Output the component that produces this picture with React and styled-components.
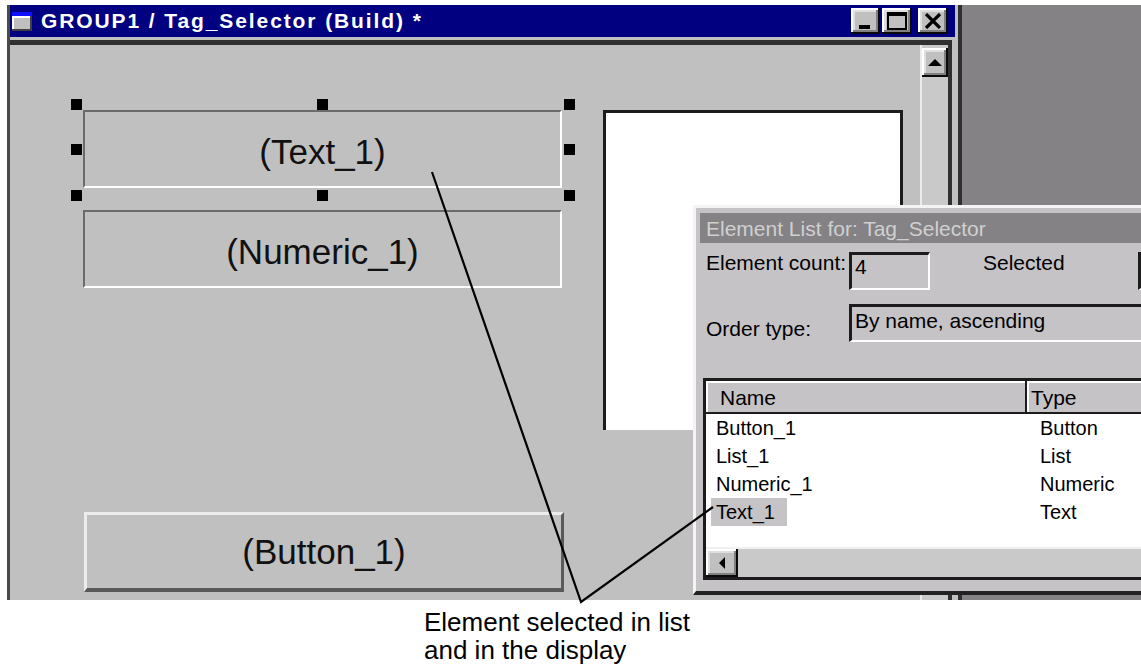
import React from 'react';
import styled, { createGlobalStyle } from 'styled-components';

const GlobalStyle = createGlobalStyle`
  html, body {
    margin: 0;
    padding: 0;
    background: #ffffff;
  }
  body {
    font-family: "Liberation Sans", Arial, sans-serif;
    color: #000;
  }
  * {
    box-sizing: border-box;
  }
`;

const Page = styled.div`
  position: relative;
  width: 1141px;
  height: 666px;
  overflow: hidden;
  background: #fff;
`;

const Screen = styled.div`
  position: relative;
  margin: 5px 0 0 7px;
  height: 595px;
  background: #848284;
  overflow: hidden;
`;

/* ---------- main builder window ---------- */

const Window = styled.div`
  position: absolute;
  left: 0;
  top: 0;
  width: 955px;
  height: 640px;
  display: flex;
  flex-direction: column;
  background: #c0c0c0;
  border-left: 3px solid #4a4a4a;
  border-right: 4px solid #303030;
`;

const TitleBar = styled.div`
  flex-shrink: 0;
  height: 32px;
  margin-right: 3px;
  background: #000080;
  display: flex;
  align-items: center;
`;

const AppIcon = styled.div`
  width: 20px;
  height: 19px;
  margin-left: 2px;
  background: #c0c0c0;
  border-top: 4px solid #1010ff;
  box-shadow: inset -2px -2px #404040, inset 2px 2px #ffffff;
`;

const TitleText = styled.div`
  margin-left: 9px;
  color: #fff;
  font-weight: bold;
  font-size: 21px;
  letter-spacing: 1.9px;
  white-space: nowrap;
`;

const CaptionButtons = styled.div`
  margin-left: auto;
  margin-right: 7px;
  display: flex;
  align-items: center;
`;

const bevel = `
  box-shadow: inset -2px -2px #0a0a0a, inset 2px 2px #ffffff,
    inset -4px -4px #808080, inset 4px 4px #dfdfdf;
`;

const CaptionButton = styled.div`
  width: ${(p) => p.$w}px;
  height: 26px;
  margin-left: ${(p) => p.$ml || 0}px;
  background: #c0c0c0;
  ${bevel}
  display: flex;
  align-items: ${(p) => (p.$bottom ? 'flex-end' : 'center')};
  justify-content: ${(p) => (p.$bottom ? 'flex-start' : 'center')};
  padding: ${(p) => (p.$bottom ? '0 0 5px 8px' : '0')};
`;

const MinGlyph = styled.div`
  width: 11px;
  height: 4px;
  background: #000;
`;

const MaxGlyph = styled.div`
  width: 20px;
  height: 18px;
  border: 2px solid #000;
  border-top-width: 4px;
`;

const Strip = styled.div`
  flex-shrink: 0;
  height: 3px;
`;

const Client = styled.div`
  flex: 1;
  display: flex;
  margin-right: 6px;
  border-top: 5px solid #303030;
  border-right: 4px solid #303030;
`;

const Canvas = styled.div`
  position: relative;
  flex: 1;
  background: #c0c0c0;
  overflow: hidden;
`;

const VScroll = styled.div`
  width: 28px;
  display: flex;
  flex-direction: column;
  padding-top: 3px;
  background: #c9c9c9;
  border-left: 2px solid #ececec;
`;

const ScrollButton = styled.div`
  flex-shrink: 0;
  width: ${(p) => p.$w || 'auto'};
  height: ${(p) => p.$h || 'auto'};
  background: #c0c0c0;
  ${bevel}
  display: flex;
  align-items: center;
  justify-content: center;
`;

const UpArrow = styled.div`
  width: 0;
  height: 0;
  border-left: 7px solid transparent;
  border-right: 7px solid transparent;
  border-bottom: 7px solid #000;
`;

const LeftArrow = styled.div`
  width: 0;
  height: 0;
  border-top: 6px solid transparent;
  border-bottom: 6px solid transparent;
  border-right: 6px solid #000;
`;

/* items placed on the design canvas */

const Item = styled.div`
  position: absolute;
  left: ${(p) => p.$x}px;
  top: ${(p) => p.$y}px;
  width: ${(p) => p.$w}px;
  height: ${(p) => p.$h}px;
  display: flex;
  align-items: center;
  justify-content: center;
  font-family: "Liberation Sans", Arial, sans-serif;
  font-size: 35px;
  color: #111;
`;

const FieldItem = styled(Item)`
  border-top: 2px solid #6a6a6a;
  border-left: 2px solid #6a6a6a;
  border-bottom: 2px solid #ffffff;
  border-right: 2px solid #ffffff;
  padding-top: 6px;
`;

const ButtonItem = styled(Item)`
  border-top: 3px solid #ececec;
  border-left: 3px solid #ececec;
  border-bottom: 4px solid #5a5a5a;
  border-right: 3px solid #5a5a5a;
`;

const ListItem = styled(Item)`
  background: #fff;
  border-top: 3px solid #1c1c1c;
  border-left: 3px solid #1c1c1c;
  border-right: 3px solid #1c1c1c;
`;

const Handle = styled.div`
  position: absolute;
  left: ${(p) => p.$cx - 5}px;
  top: ${(p) => p.$cy - 5}px;
  width: 11px;
  height: 11px;
  background: #000;
`;

/* ---------- element list dialog ---------- */

const Dialog = styled.div`
  position: absolute;
  left: 686px;
  top: 200px;
  width: 480px;
  display: flex;
  flex-direction: column;
  background: #c6c3c6;
  border-top: 3px solid #f4f4f4;
  border-left: 3px solid #f4f4f4;
  border-bottom: 4px solid #222;
  padding: 5px 0 11px 4px;
  font-family: "Liberation Sans", Arial, sans-serif;
`;

const DialogTitle = styled.div`
  height: 30px;
  background: #848284;
  color: #d0d0d0;
  font-size: 21px;
  line-height: 30px;
  padding: 1px 0 0 6px;
  white-space: nowrap;
`;

const FormRow = styled.div`
  display: flex;
  align-items: flex-start;
  margin-top: ${(p) => p.$mt}px;
  padding-left: 6px;
`;

const Label = styled.div`
  flex-shrink: 0;
  width: ${(p) => p.$w}px;
  margin-left: ${(p) => p.$ml || 0}px;
  margin-top: ${(p) => p.$mt || 0}px;
  font-size: 21px;
  line-height: 24px;
  white-space: nowrap;
`;

const Field = styled.div`
  flex-shrink: 0;
  width: ${(p) => p.$w}px;
  height: 38px;
  padding: ${(p) => p.$pt || 0}px 0 0 3px;
  border-top: 3px solid #1c1c1c;
  border-left: 3px solid #1c1c1c;
  border-right: 2px solid #fff;
  border-bottom: 2px solid #fff;
  background: #c6c3c6;
  font-size: 21px;
  line-height: 24px;
  white-space: nowrap;
`;

const ListView = styled.div`
  margin: 36px 0 0 3px;
  display: flex;
  flex-direction: column;
  background: #fff;
  border-top: 3px solid #1c1c1c;
  border-left: 3px solid #1c1c1c;
  border-bottom: 3px solid #1c1c1c;
`;

const Columns = styled.div`
  display: grid;
  grid-template-columns: 321px 1fr;
  height: ${(p) => p.$h}px;
`;

const HeaderCell = styled.div`
  background: #c6c3c6;
  box-shadow: inset -2px -2px #1c1c1c, inset 2px 2px #ffffff;
  font-size: 21px;
  line-height: 33px;
  padding-left: ${(p) => p.$pl}px;
`;

const Cell = styled.div`
  font-size: 20px;
  line-height: 28px;
  padding-left: ${(p) => p.$pl}px;
  white-space: nowrap;
`;

const NameText = styled.span`
  display: inline-block;
  height: 28px;
  padding: 0 12px 0 5px;
  background: ${(p) => (p.$selected ? '#c6c3c6' : 'transparent')};
`;

const Filler = styled.div`
  height: 21px;
`;

const HScroll = styled.div`
  height: 30px;
  display: flex;
  background: #c9c9c9;
  border-top: 2px solid #f0f0f0;
`;

/* ---------- annotation ---------- */

const Caption = styled.div`
  margin-left: 424px;
  padding-top: 8px;
  font-family: "Liberation Sans", Arial, Helvetica, sans-serif;
  font-size: 26px;
  line-height: 28px;
  color: #000;
`;

const Pointer = styled.svg`
  position: absolute;
  left: 0;
  top: 0;
  pointer-events: none;
`;

const elements = [
  { name: 'Button_1', type: 'Button' },
  { name: 'List_1', type: 'List' },
  { name: 'Numeric_1', type: 'Numeric' },
  { name: 'Text_1', type: 'Text', selected: true },
];

const handles = [
  [66, 59], [312, 59], [559, 59],
  [66, 104], [559, 104],
  [66, 150], [312, 150], [559, 150],
];

export default function App() {
  return (
    <Page>
      <GlobalStyle />
      <Screen>
        <Window>
          <TitleBar>
            <AppIcon />
            <TitleText>GROUP1 / Tag_Selector (Build) *</TitleText>
            <CaptionButtons>
              <CaptionButton $w={29} $bottom>
                <MinGlyph />
              </CaptionButton>
              <CaptionButton $w={30} $ml={2}>
                <MaxGlyph />
              </CaptionButton>
              <CaptionButton $w={30} $ml={6}>
                <svg width="18" height="16" viewBox="0 0 18 16">
                  <path d="M2 1 L16 15 M16 1 L2 15" stroke="#000" strokeWidth="3.2" />
                </svg>
              </CaptionButton>
            </CaptionButtons>
          </TitleBar>
          <Strip />
          <Client>
            <Canvas>
              <FieldItem $x={73} $y={65} $w={479} $h={78}>(Text_1)</FieldItem>
              {handles.map(([cx, cy]) => (
                <Handle key={`${cx}-${cy}`} $cx={cx} $cy={cy} />
              ))}
              <FieldItem $x={73} $y={165} $w={479} $h={78}>(Numeric_1)</FieldItem>
              <ListItem $x={593} $y={65} $w={300} $h={320} />
              <ButtonItem $x={74} $y={467} $w={480} $h={80}>(Button_1)</ButtonItem>
            </Canvas>
            <VScroll>
              <ScrollButton $h="29px">
                <UpArrow />
              </ScrollButton>
            </VScroll>
          </Client>
        </Window>

        <Dialog>
          <DialogTitle>Element List for: Tag_Selector</DialogTitle>
          <FormRow $mt={9}>
            <Label $w={143} $mt={-1}>Element count:</Label>
            <Field $w={81} $pt={0}>4</Field>
            <Label $w={155} $ml={53} $mt={-1}>Selected</Label>
            <Field $w={100} />
          </FormRow>
          <FormRow $mt={14}>
            <Label $w={143} $mt={13}>Order type:</Label>
            <Field $w={400} $pt={2}>By name, ascending</Field>
          </FormRow>
          <ListView>
            <Columns $h={33}>
              <HeaderCell $pl={14}>Name</HeaderCell>
              <HeaderCell $pl={4}>Type</HeaderCell>
            </Columns>
            {elements.map((el) => (
              <Columns key={el.name} $h={28}>
                <Cell $pl={5}>
                  <NameText $selected={el.selected}>{el.name}</NameText>
                </Cell>
                <Cell $pl={13}>{el.type}</Cell>
              </Columns>
            ))}
            <Filler />
            <HScroll>
              <ScrollButton $w="32px">
                <LeftArrow />
              </ScrollButton>
            </HScroll>
          </ListView>
        </Dialog>
      </Screen>

      <Caption>
        Element selected in list
        <br />
        and in the display
      </Caption>

      <Pointer width="1141" height="666" viewBox="0 0 1141 666">
        <polyline
          points="432,172 581,602 713,507"
          fill="none"
          stroke="#000"
          strokeWidth="2.2"
        />
      </Pointer>
    </Page>
  );
}
